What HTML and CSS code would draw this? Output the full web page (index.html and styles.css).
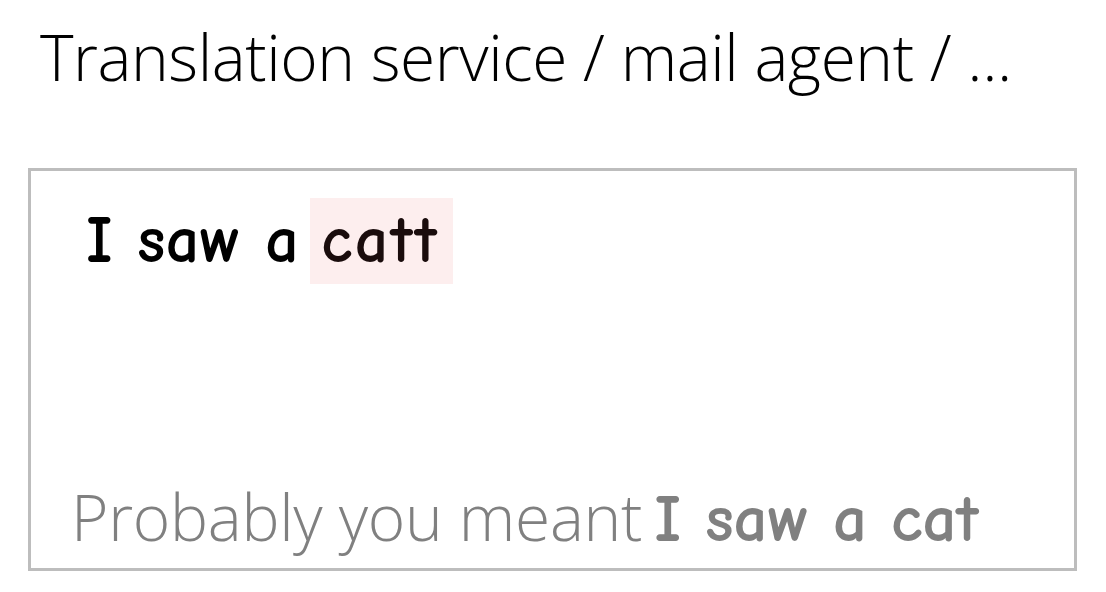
FILE: index.html
```html
<!DOCTYPE html>
<html>
<head>
<meta charset="utf-8">
<link rel="stylesheet" href="styles.css">
</head>
<body>
<div class="page">
  <h1 class="title">Translation service / mail agent / ...</h1>
  <div class="box">
    <div class="input">I saw a <span class="typo">catt</span></div>
    <div class="hint"><span class="hint-label">Probably you meant</span> <span class="hint-fix">I saw a cat</span></div>
  </div>
</div>
</body>
</html>
```
FILE: styles.css
```css
html, body {
  margin: 0;
  padding: 0;
  background: #ffffff;
}
.page {
  width: 1106px;
  height: 592px;
  padding: 0 0 0 28px;
  box-sizing: border-box;
}
.title {
  margin: 0;
  padding: 17px 0 0 12px;
  height: 168px;
  box-sizing: border-box;
  font-family: "Open Sans", sans-serif;
  font-weight: 300;
  font-size: 64px;
  line-height: 80px;
  color: #000;
  letter-spacing: -0.45px;
}
.box {
  width: 1049px;
  height: 403px;
  box-sizing: border-box;
  border: 3px solid #bdbdbd;
  display: flex;
  flex-direction: column;
  justify-content: space-between;
  padding: 27px 0 8px 40px;
}
.input {
  font-family: "Comic Sans MS", "Comic Neue", "Open Sans", sans-serif;
  font-weight: 700;
  font-size: 66px;
  line-height: 86px;
  height: 86px;
  color: #000;
  padding-left: 15px;
  letter-spacing: 0.5px;
}
.typo {
  display: inline-block;
  line-height: 86px;
  background: #fdeeee;
  color: #1a0c0c;
  letter-spacing: 2.5px;
  padding: 0 14px 0 11px;
  margin-left: -13px;
}
.hint {
  font-size: 64px;
  line-height: 80px;
  color: #808080;
}
.hint-label {
  font-family: "Open Sans", sans-serif;
  font-weight: 300;
  letter-spacing: -0.3px;
}
.hint-fix {
  font-family: "Comic Sans MS", "Comic Neue", "Open Sans", sans-serif;
  font-weight: 700;
  font-size: 67px;
  margin-left: -4px;
}
```
